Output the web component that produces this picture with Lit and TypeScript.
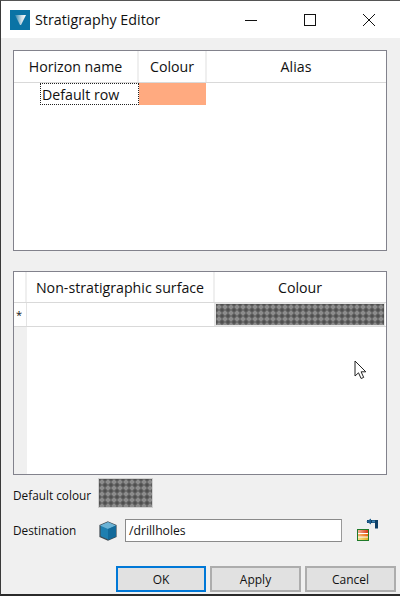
import { LitElement, html, css } from "lit";
import { customElement } from "lit/decorators.js";

@customElement("app-root")
export class AppRoot extends LitElement {
  static styles = css`
    :host { display: block; width: 400px; height: 596px; }
    * { box-sizing: border-box; }
    .win {
      width: 400px; height: 596px; background: #f0f0f0; display: flex; flex-direction: column;
      border-left: 1px solid #3a3a3a; border-top: 1px solid #555; border-bottom: 2px solid #2a2a2a;
      font-family: "Open Sans", "Noto Sans", sans-serif; color: #111; position: relative; overflow: hidden;
    }
    .title { height: 37px; background: #fff; display: flex; align-items: center; padding: 0 2px 0 9px; flex: none; }
    .title .logo { width: 20px; height: 20px; flex: none; display: block; }
    .title .name { margin-left: 5px; font-size: 14.3px; flex: 1; white-space: nowrap; }
    .wbtn { width: 59px; height: 37px; display: flex; align-items: center; justify-content: center; flex: none; }
    .wbtn svg { display: block; }
    .body { flex: 1; display: flex; flex-direction: column; padding: 12px 13px 0 12px; min-height: 0; }
    .table { width: 374px; border: 1px solid #82828c; background: #fff; display: flex; flex-direction: column; flex: none; }
    .t1 { height: 201px; }
    .t2 { height: 204px; margin-top: 20px; position: relative; }
    .head { display: grid; font-size: 14.2px; text-align: center; border-bottom: 1px solid #d9d9d9; flex: none; }
    .t1 .head, .t1 .row { grid-template-columns: 125px 68px 178px; }
    .t2 .head, .t2 .row { grid-template-columns: 13px 188px 170px; }
    .t1 .head { height: 32px; }
    .t2 .head { height: 31px; }
    .head > div { display: flex; align-items: center; justify-content: center; border-right: 2px solid #efefef; white-space: nowrap; }
    .head > div:last-child { border-right: none; }
    .row { display: grid; flex: none; font-size: 14.2px; }
    .t1 .row { height: 22px; }
    .t2 .row { height: 24px; border-bottom: 1px solid #d9d9d9; }
    .edit { margin-left: 26px; border: 1px dotted #222; display: flex; align-items: center; padding-left: 1px; white-space: nowrap; height: 22px; }
    .peach { background: #ffaa80; margin-right: 1px; }
    .star { font-size: 11px; background: #fff; display: flex; align-items: center; padding-left: 2px; border-right: 1px solid #e4e4e4; }
    .cell2 { border-right: 1px solid #e4e4e4; }
    .hatch {
      background-color: #6e6e6e;
      background-image:
        radial-gradient(circle at 3px 3px, #8c8c8c 0 1.6px, transparent 1.8px),
        radial-gradient(circle at 0 0, #4f4f4f 0 1.5px, transparent 1.7px),
        radial-gradient(circle at 6px 0, #4f4f4f 0 1.5px, transparent 1.7px),
        radial-gradient(circle at 0 6px, #4f4f4f 0 1.5px, transparent 1.7px),
        radial-gradient(circle at 6px 6px, #4f4f4f 0 1.5px, transparent 1.7px);
      background-size: 6px 6px;
    }
    .swatch-cell { padding: 1px; background: #e6e6e6; }
    .swatch-cell .hatch { height: 100%; }
    .rest { flex: 1; display: flex; min-height: 0; }
    .gutter { width: 13px; background: #f0f0f0; flex: none; }
    .cursor { position: absolute; left: 340px; top: 88px; display: block; }
    .defrow { display: flex; align-items: center; margin-top: 3px; height: 30px; font-size: 11.8px; }
    .defrow .lab { width: 85px; flex: none; padding-top: 3px; }
    .defrow .hatch { width: 55px; height: 30px; border: 1px solid #d0d0d0; }
    .dest { display: flex; align-items: center; margin-top: 10px; height: 25px; font-size: 11.8px; }
    .dest .lab { width: 85px; flex: none; padding-bottom: 1px; }
    .cube { width: 20px; height: 22px; margin-right: 7px; flex: none; display: block; }
    .input { width: 217px; height: 23px; background: #fff; border: 1px solid #8a8a8a; border-right-color: #999; display: flex; align-items: center; padding-left: 3px; font-size: 12.2px; flex: none; }
    .pick { width: 24px; height: 26px; margin-left: 15px; flex: none; display: block; }
    .btns { display: flex; justify-content: flex-end; gap: 4px; margin-top: 23px; margin-right: -9px; }
    .btn { width: 91px; height: 26px; background: #e1e1e1; border: 2px solid #adadad; display: flex; align-items: center; justify-content: center; font-size: 12px; }
    .btn.def { border-color: #0078d7; width: 90px; }
  `;

  render() {
    return html`<div class="win">
      <div class="title">
        <svg class="logo" viewBox="0 0 20 20">
          <defs><linearGradient id="v" x1="0" y1="0" x2="1" y2="0">
            <stop offset="0" stop-color="#2f84ac"/><stop offset="0.6" stop-color="#cfe0e8"/><stop offset="1" stop-color="#ffffff"/>
          </linearGradient></defs>
          <rect width="20" height="20" fill="#0a73a5"/>
          <path d="M5 5h11l-5 10h-1z" fill="url(#v)"/>
        </svg>
        <div class="name">Stratigraphy Editor</div>
        <div class="wbtn"><svg width="14" height="14" viewBox="0 0 14 14"><path d="M1 7.5h12" stroke="#111" stroke-width="1" fill="none"/></svg></div>
        <div class="wbtn"><svg width="14" height="14" viewBox="0 0 14 14"><rect x="1.5" y="1.5" width="11" height="11" stroke="#111" stroke-width="1" fill="none"/></svg></div>
        <div class="wbtn"><svg width="14" height="14" viewBox="0 0 14 14"><path d="M1 1l12 12M13 1L1 13" stroke="#111" stroke-width="1" fill="none"/></svg></div>
      </div>
      <div class="body">
        <div class="table t1">
          <div class="head"><div>Horizon name</div><div>Colour</div><div>Alias</div></div>
          <div class="row"><div class="edit">Default row</div><div class="peach"></div><div></div></div>
        </div>
        <div class="table t2">
          <div class="head"><div></div><div>Non-stratigraphic surface</div><div>Colour</div></div>
          <div class="row"><div class="star">*</div><div class="cell2"></div><div class="swatch-cell"><div class="hatch"></div></div></div>
          <div class="rest"><div class="gutter"></div></div>
          <svg class="cursor" width="14" height="20" viewBox="0 0 14 20">
            <path d="M1 1v15l3.5-3.2 2.6 5.700 2.600-1.100-2.600-5.600h4.700z" fill="#fff" stroke="#222" stroke-width="1"/>
          </svg>
        </div>
        <div class="defrow"><div class="lab">Default colour</div><div class="hatch"></div></div>
        <div class="dest">
          <div class="lab">Destination</div>
          <svg class="cube" viewBox="0 0 20 22">
            <path d="M10 2l8 3.500v11L10 20l-8-3.500v-11z" fill="#1f7fb0" stroke="#3f4a52" stroke-width="1.2"/>
            <path d="M10 2l8 3.500L10 9 2 5.500z" fill="#6bb3d6"/>
            <path d="M10 9v11l8-3.500v-11z" fill="#136a9a"/>
          </svg>
          <div class="input">/drillholes</div>
          <svg class="pick" viewBox="0 0 24 26">
            <defs><linearGradient id="s" x1="0" y1="0" x2="1" y2="0">
              <stop offset="0" stop-color="#f0b090"/><stop offset="1" stop-color="#d83a1a"/>
            </linearGradient><linearGradient id="y" x1="0" y1="0" x2="1" y2="0">
              <stop offset="0" stop-color="#f5e090"/><stop offset="1" stop-color="#e0b020"/>
            </linearGradient><linearGradient id="o" x1="0" y1="0" x2="1" y2="0">
              <stop offset="0" stop-color="#f5b870"/><stop offset="1" stop-color="#e86a10"/>
            </linearGradient></defs>
            <rect x="0.500" y="11.500" width="11" height="11" fill="#fff" stroke="#1f7a2a"/>
            <rect x="1" y="12" width="10" height="3" fill="url(#s)"/>
            <rect x="1" y="16" width="10" height="2.500" fill="url(#o)"/>
            <rect x="1" y="19.500" width="10" height="2.500" fill="url(#y)"/>
            <path d="M10 3.500h9.500v7" fill="none" stroke="#0f3f66" stroke-width="3"/>
            <path d="M15 3.500h3" stroke="#3f86b5" stroke-width="2"/>
            <path d="M14 0.500v6l-4.500-3z" fill="#1f5f8f"/>
          </svg>
        </div>
        <div class="btns">
          <div class="btn def">OK</div><div class="btn">Apply</div><div class="btn">Cancel</div>
        </div>
      </div>
    </div>`;
  }
}
